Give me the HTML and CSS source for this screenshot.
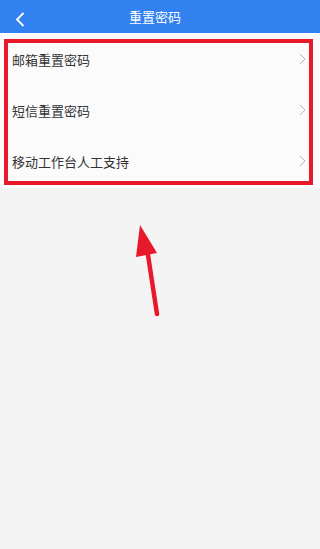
FILE: index.html
```html
<!DOCTYPE html>
<html lang="zh">
<head>
<meta charset="utf-8">
<title>重置密码</title>
<link rel="stylesheet" href="styles.css">
</head>
<body>
<div class="page">
  <header class="bar">
    <svg class="back" width="10" height="15" viewBox="0 0 10 15"><path d="M8.5 1 L2 7.5 L8.5 14" fill="none" stroke="#fff" stroke-width="1.8"/></svg>
    <h1 class="title">重置密码</h1>
  </header>
  <ul class="list">
    <li class="row"><span>邮箱重置密码</span><svg class="chev" width="7" height="12" viewBox="0 0 7 12"><path d="M1 1 L6 6 L1 11" fill="none" stroke="#b5b5b5" stroke-width="1"/></svg></li>
    <li class="row"><span>短信重置密码</span><svg class="chev" width="7" height="12" viewBox="0 0 7 12"><path d="M1 1 L6 6 L1 11" fill="none" stroke="#b5b5b5" stroke-width="1"/></svg></li>
    <li class="row"><span>移动工作台人工支持</span><svg class="chev" width="7" height="12" viewBox="0 0 7 12"><path d="M1 1 L6 6 L1 11" fill="none" stroke="#b5b5b5" stroke-width="1"/></svg></li>
  </ul>
  <div class="highlight"></div>
  <svg class="arrow" width="320" height="549" viewBox="0 0 320 549">
    <path d="M148 255 L157 314" stroke="#e8192b" stroke-width="4.5" stroke-linecap="round" fill="none"/>
    <polygon points="140,225 136,257 157,253" fill="#e8192b"/>
  </svg>
</div>
</body>
</html>
```

FILE: styles.css
```css
html, body {
  margin: 0;
  padding: 0;
}
body {
  background: #f4f4f4;
  font-family: "Noto Sans CJK SC", "Noto Sans", sans-serif;
}
.page {
  position: relative;
  width: 320px;
  height: 549px;
  overflow: hidden;
  background: #f4f4f4;
}
.bar {
  height: 33px;
  background: #3182f0;
  display: flex;
  align-items: center;
  justify-content: center;
  position: relative;
  border-bottom: 2px solid #fdfdfd;
}
.back {
  position: absolute;
  left: 15px;
  top: 12px;
}
.title {
  margin: 0;
  padding-right: 10px;
  font-size: 13px;
  font-weight: normal;
  color: #fff;
}
.list {
  list-style: none;
  margin: 0;
  padding: 0;
  background: #fbfbfb;
}
.row {
  height: 51px;
  box-sizing: border-box;
  padding: 0 14px 3px 12px;
  display: flex;
  align-items: center;
  justify-content: space-between;
  font-size: 13px;
  color: #333;
}
.row span {
  line-height: 1;
}
.highlight {
  position: absolute;
  left: 4px;
  top: 39px;
  width: 301px;
  height: 138px;
  border: 4px solid #e8192b;
}
.arrow {
  position: absolute;
  left: 0;
  top: 0;
}
```
